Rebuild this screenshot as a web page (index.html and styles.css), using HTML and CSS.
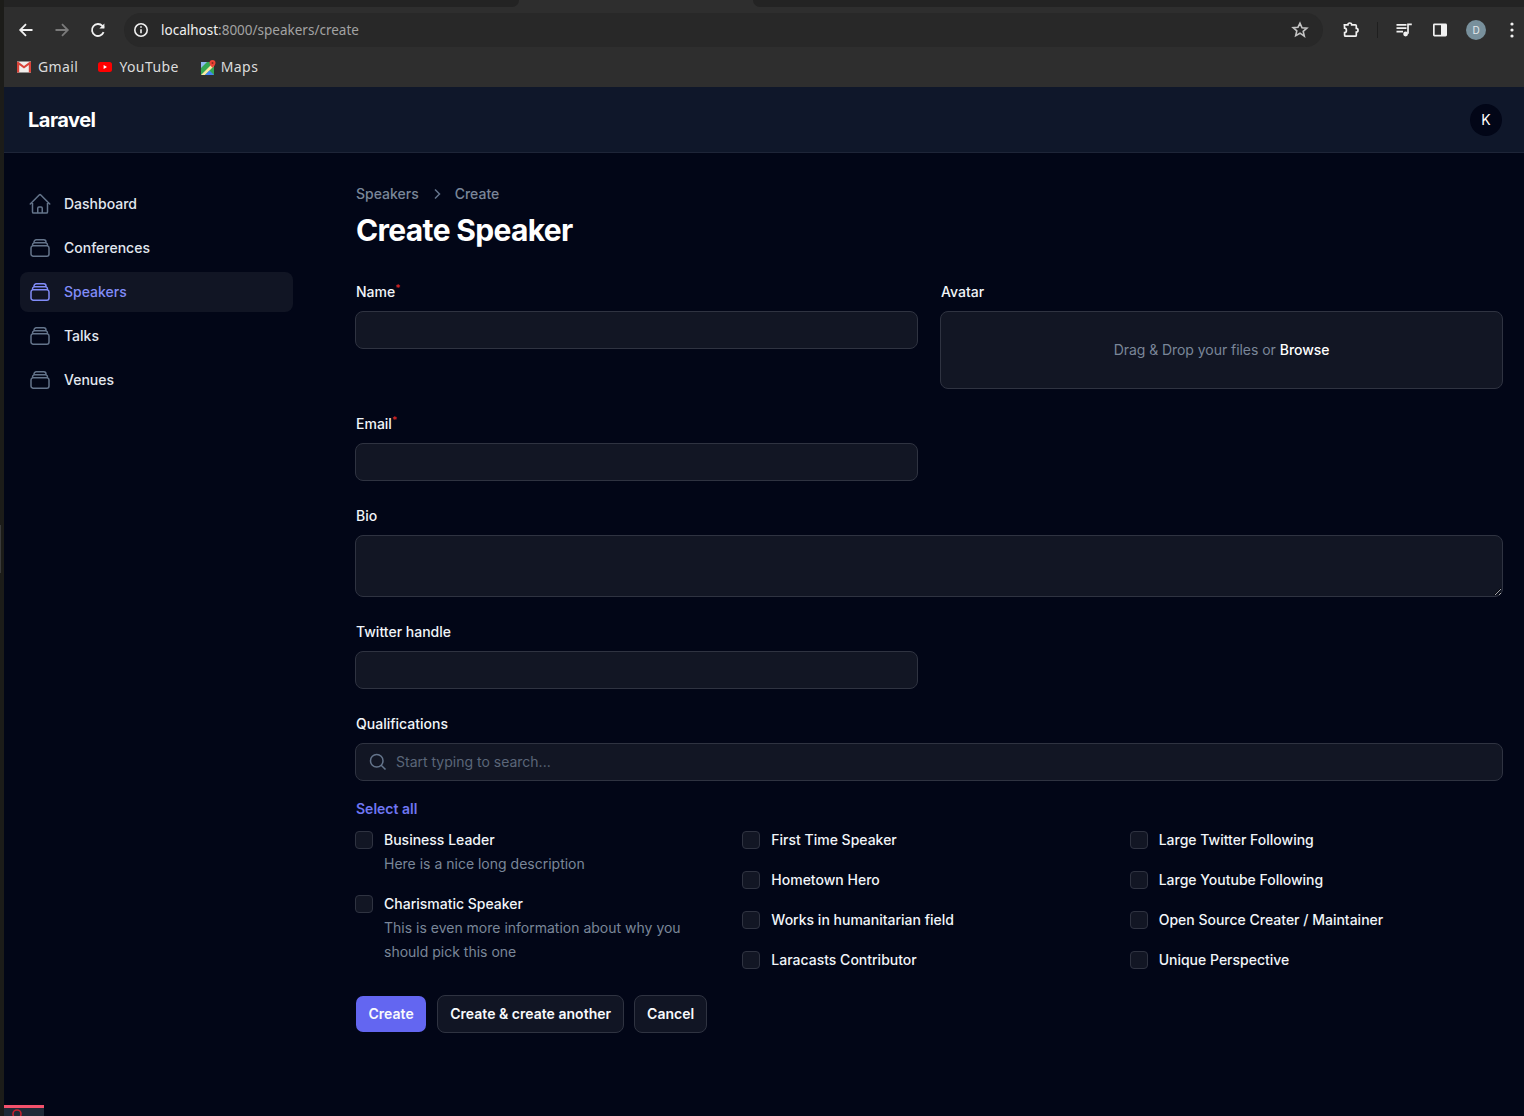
FILE: index.html
```html
<!DOCTYPE html>
<html lang="en">
<head>
    <meta charset="UTF-8">
    <title>Create Speaker</title>
    <link rel="stylesheet" href="styles.css">
</head>
<body>
    <div class="edge"><span class="edge-handle"></span></div>

    <div class="window">
        <div class="tabstrip">
            <span class="tab tab-left"></span>
            <span class="tab tab-right"></span>
        </div>

        <div class="toolbar">
            <span class="tool">
                <svg width="20" height="20" viewBox="0 0 20 20" fill="none" stroke="#f1f1f1" stroke-width="1.8"><path d="M16.5 10H4.5M10 4.2L4.2 10l5.8 5.8"/></svg>
            </span>
            <span class="tool">
                <svg width="20" height="20" viewBox="0 0 20 20" fill="none" stroke="#7a7a7a" stroke-width="1.8"><path d="M3.5 10h12M10 4.2l5.8 5.8-5.8 5.8"/></svg>
            </span>
            <span class="tool">
                <svg width="20" height="20" viewBox="0 0 20 20" fill="none" stroke="#f1f1f1" stroke-width="1.8"><path d="M15.6 12.2A6 6 0 1 1 14.4 5.9L16 7.6"/><path d="M16.4 3.4v5h-5" stroke="none" fill="#f1f1f1"/></svg>
            </span>

            <div class="omnibox">
                <svg width="20" height="20" viewBox="0 0 20 20" fill="none" stroke="#efefef" stroke-width="1.6"><circle cx="10" cy="10" r="6.2"/><path d="M10 9.2v4M10 6.2v1.6"/></svg>
                <span class="url"><b>localhost</b>:8000/speakers/create</span>
                <svg class="star" width="20" height="20" viewBox="0 0 20 20" fill="none" stroke="#c4c4c4" stroke-width="1.6"><path d="M10 3.2l2 4.5 4.9.5-3.7 3.2 1.1 4.8L10 13.2l-4.3 2.5 1.1-4.8-3.7-3.2 4.9-.5z"/></svg>
            </div>

            <span class="tool tool-puzzle">
                <svg width="20" height="20" viewBox="0 0 20 20" fill="none" stroke="#f1f1f1" stroke-width="1.7"><path d="M3.4 4.8h3.5c0-2.4 3.8-2.4 3.8 0h3.6c.6 0 1 .4 1 1v2.6c2.3 0 2.3 3.6 0 3.6v3.2c0 .6-.4 1-1 1H4.6c-.6 0-1-.4-1-1v-2.6c2.4 0 2.4-4.4 0-4.4z"/></svg>
            </span>
            <span class="tool-sep"></span>
            <span class="tool">
                <svg width="20" height="20" viewBox="0 0 20 20" fill="none" stroke="#f1f1f1" stroke-width="1.7"><path d="M2.5 4.8h10M2.5 8.2h10M2.5 11.6h6.5M14 13.8V4.4h3.8"/><circle cx="11.6" cy="14" r="2.4" fill="#f1f1f1" stroke="none"/></svg>
            </span>
            <span class="tool">
                <svg width="20" height="20" viewBox="0 0 20 20"><rect x="3" y="3.5" width="14" height="13" rx="1.4" fill="#f1f1f1"/><rect x="4.7" y="5.2" width="6.3" height="9.6" fill="#2e2e2e"/></svg>
            </span>
            <span class="tool">
                <span class="profile">D</span>
            </span>
            <span class="tool tool-kebab">
                <svg width="4" height="16" viewBox="0 0 4 16" fill="#f1f1f1"><circle cx="2" cy="2" r="1.6"/><circle cx="2" cy="8" r="1.6"/><circle cx="2" cy="14" r="1.6"/></svg>
            </span>
        </div>

        <div class="bookmarks">
            <a class="bookmark">
                <svg width="14" height="14" viewBox="0 0 14 14"><rect y="1.5" width="14" height="11" fill="#f1efec"/><path d="M0 2v10.5h2.2V5L7 8.6 11.8 5v7.5H14V2l-1-.5L7 6 1 1.5z" fill="#d9443a"/></svg>
                Gmail
            </a>
            <a class="bookmark">
                <svg width="14" height="14" viewBox="0 0 14 14"><rect y="2" width="14" height="10" rx="2.5" fill="#f00"/><path d="M5.6 5v4L9 7z" fill="#fff"/></svg>
                YouTube
            </a>
            <a class="bookmark bookmark-maps">
                <svg width="15" height="15" viewBox="0 0 15 15"><rect y="2" width="13" height="13" fill="#34a853"/><path d="M0 15L13 2v4L4 15z" fill="#fbe9a5"/><path d="M0 2h6L0 8z" fill="#8fb8f0"/><path d="M4 15l4.5-4.5L13 15z" fill="#4285f4"/><path d="M11.5 0a3 3 0 0 1 3 3c0 2-3 4.8-3 4.8S8.5 5 8.5 3a3 3 0 0 1 3-3z" fill="#ea4335"/><circle cx="11.5" cy="3" r="1" fill="#8c2a22"/></svg>
                Maps
            </a>
        </div>

        <header class="app-header">
            <span class="logo">Laravel</span>
            <span class="user-badge">K</span>
        </header>

        <div class="app-body">
            <aside class="sidebar">
                <a class="nav-item">
                    <svg class="nav-icon" viewBox="0 0 24 24"><path d="M2.25 12l8.954-8.955c.44-.439 1.152-.439 1.591 0L21.75 12M4.5 9.75v10.125c0 .621.504 1.125 1.125 1.125H9.75v-4.875c0-.621.504-1.125 1.125-1.125h2.25c.621 0 1.125.504 1.125 1.125V21h4.125c.621 0 1.125-.504 1.125-1.125V9.75M8.25 21h8.25"/></svg>
                    Dashboard
                </a>
                <a class="nav-item">
                    <svg class="nav-icon" viewBox="0 0 24 24"><path d="M6 6.878V6a2.25 2.25 0 012.25-2.25h7.5A2.25 2.25 0 0118 6v.878m-12 0c.235-.083.487-.128.75-.128h10.5c.263 0 .515.045.75.128m-12 0A2.25 2.25 0 004.5 9v.878m13.5-3A2.25 2.25 0 0119.5 9v.878m0 0a2.246 2.246 0 00-.75-.128H5.25c-.263 0-.515.045-.75.128m15 0A2.25 2.25 0 0121 12v6a2.25 2.25 0 01-2.25 2.25H5.25A2.25 2.25 0 013 18v-6c0-.98.626-1.813 1.5-2.122"/></svg>
                    Conferences
                </a>
                <a class="nav-item active">
                    <svg class="nav-icon" viewBox="0 0 24 24"><path d="M6 6.878V6a2.25 2.25 0 012.25-2.25h7.5A2.25 2.25 0 0118 6v.878m-12 0c.235-.083.487-.128.75-.128h10.5c.263 0 .515.045.75.128m-12 0A2.25 2.25 0 004.5 9v.878m13.5-3A2.25 2.25 0 0119.5 9v.878m0 0a2.246 2.246 0 00-.75-.128H5.25c-.263 0-.515.045-.75.128m15 0A2.25 2.25 0 0121 12v6a2.25 2.25 0 01-2.25 2.25H5.25A2.25 2.25 0 013 18v-6c0-.98.626-1.813 1.5-2.122"/></svg>
                    Speakers
                </a>
                <a class="nav-item">
                    <svg class="nav-icon" viewBox="0 0 24 24"><path d="M6 6.878V6a2.25 2.25 0 012.25-2.25h7.5A2.25 2.25 0 0118 6v.878m-12 0c.235-.083.487-.128.75-.128h10.5c.263 0 .515.045.75.128m-12 0A2.25 2.25 0 004.5 9v.878m13.5-3A2.25 2.25 0 0119.5 9v.878m0 0a2.246 2.246 0 00-.75-.128H5.25c-.263 0-.515.045-.75.128m15 0A2.25 2.25 0 0121 12v6a2.25 2.25 0 01-2.25 2.25H5.25A2.25 2.25 0 013 18v-6c0-.98.626-1.813 1.5-2.122"/></svg>
                    Talks
                </a>
                <a class="nav-item">
                    <svg class="nav-icon" viewBox="0 0 24 24"><path d="M6 6.878V6a2.25 2.25 0 012.25-2.25h7.5A2.25 2.25 0 0118 6v.878m-12 0c.235-.083.487-.128.75-.128h10.5c.263 0 .515.045.75.128m-12 0A2.25 2.25 0 004.5 9v.878m13.5-3A2.25 2.25 0 0119.5 9v.878m0 0a2.246 2.246 0 00-.75-.128H5.25c-.263 0-.515.045-.75.128m15 0A2.25 2.25 0 0121 12v6a2.25 2.25 0 01-2.25 2.25H5.25A2.25 2.25 0 013 18v-6c0-.98.626-1.813 1.5-2.122"/></svg>
                    Venues
                </a>
            </aside>

            <main class="content">
                <div class="breadcrumbs">
                    <span>Speakers</span>
                    <svg width="20" height="20" viewBox="0 0 20 20" fill="none" stroke="#64748b" stroke-width="1.5"><path d="M8 5.5l4.5 4.5L8 14.5"/></svg>
                    <span>Create</span>
                </div>
                <h1 class="page-title">Create Speaker</h1>

                <form class="form-grid">
                    <div class="field">
                        <label class="field-label">Name<sup>*</sup></label>
                        <input class="text-input" type="text">
                    </div>
                    <div class="field">
                        <label class="field-label">Avatar</label>
                        <div class="dropzone">Drag &amp; Drop your files or <b>Browse</b></div>
                    </div>
                    <div class="field">
                        <label class="field-label">Email<sup>*</sup></label>
                        <input class="text-input" type="email">
                    </div>
                    <div class="field field-wide">
                        <label class="field-label">Bio</label>
                        <textarea class="text-input bio-input"></textarea>
                    </div>
                    <div class="field">
                        <label class="field-label">Twitter handle</label>
                        <input class="text-input" type="text">
                    </div>
                    <div class="field field-wide">
                        <label class="field-label">Qualifications</label>
                        <div class="search-box">
                            <svg width="20" height="20" viewBox="0 0 24 24" fill="none" stroke="#64748b" stroke-width="1.8"><path d="M21 21l-5.197-5.197m0 0A7.5 7.5 0 105.196 5.196a7.5 7.5 0 0010.607 10.607z"/></svg>
                            <input class="search-input" type="text" placeholder="Start typing to search...">
                        </div>
                        <a class="select-all">Select all</a>
                        <div class="check-grid">
                            <div class="check-col">
                                <label class="check-item">
                                    <input class="check" type="checkbox">
                                    <span><span class="check-name">Business Leader</span><span class="check-desc">Here is a nice long description</span></span>
                                </label>
                                <label class="check-item">
                                    <input class="check" type="checkbox">
                                    <span><span class="check-name">Charismatic Speaker</span><span class="check-desc">This is even more information about why you should pick this one</span></span>
                                </label>
                            </div>
                            <div class="check-col">
                                <label class="check-item"><input class="check" type="checkbox"><span class="check-name">First Time Speaker</span></label>
                                <label class="check-item"><input class="check" type="checkbox"><span class="check-name">Hometown Hero</span></label>
                                <label class="check-item"><input class="check" type="checkbox"><span class="check-name">Works in humanitarian field</span></label>
                                <label class="check-item"><input class="check" type="checkbox"><span class="check-name">Laracasts Contributor</span></label>
                            </div>
                            <div class="check-col">
                                <label class="check-item"><input class="check" type="checkbox"><span class="check-name">Large Twitter Following</span></label>
                                <label class="check-item"><input class="check" type="checkbox"><span class="check-name">Large Youtube Following</span></label>
                                <label class="check-item"><input class="check" type="checkbox"><span class="check-name">Open Source Creater / Maintainer</span></label>
                                <label class="check-item"><input class="check" type="checkbox"><span class="check-name">Unique Perspective</span></label>
                            </div>
                        </div>
                    </div>
                </form>

                <div class="form-actions">
                    <button class="btn btn-primary" type="button">Create</button>
                    <button class="btn" type="button">Create &amp; create another</button>
                    <button class="btn" type="button">Cancel</button>
                </div>
            </main>
        </div>
    </div>

    <div class="debug-tab">
        <svg width="12" height="12" viewBox="0 0 12 12" fill="none" stroke="#c4222f" stroke-width="1.6"><circle cx="6" cy="6" r="4"/></svg>
    </div>
</body>
</html>
```

FILE: styles.css
```css
* {
    box-sizing: border-box;
}

html, body {
    height: 100%;
}

body {
    margin: 0;
    display: flex;
    overflow: hidden;
    background-color: #1c1c19;
    color: #f3f4f6;
    font-family: "Inter", "Liberation Sans", sans-serif;
    font-size: 14px;
    line-height: 20px;
}

.edge {
    position: relative;
    width: 4px;
    flex-shrink: 0;
}

.edge-handle {
    position: absolute;
    left: 0;
    top: 525px;
    width: 1px;
    height: 48px;
    background-color: #3a3a3a;
}

.window {
    flex: 1;
    min-width: 0;
    display: flex;
    flex-direction: column;
    background-color: #020617;
}

/* browser chrome */
.tabstrip {
    display: flex;
    justify-content: space-between;
    height: 7px;
    background-color: #2e2e2e;
}

.tab {
    display: block;
    height: 7px;
    background-color: #232323;
}

.tab-left {
    width: 515px;
    border-bottom-right-radius: 8px;
}

.tab-right {
    width: 771px;
    border-bottom-left-radius: 8px;
}

.toolbar {
    display: flex;
    align-items: center;
    height: 40px;
    padding-left: 4px;
    padding-top: 6px;
    background-color: #2e2e2e;
}

.tool {
    display: flex;
    align-items: center;
    justify-content: center;
    width: 36px;
    height: 34px;
    flex-shrink: 0;
}

.tool-puzzle {
    margin-left: 10px;
}

.tool-sep {
    width: 1px;
    height: 16px;
    margin: 0 8px;
    background-color: #1f1f1f;
    flex-shrink: 0;
}

.tool-kebab {
    width: 30px;
    justify-content: flex-end;
    padding-right: 10px;
}

.omnibox {
    flex: 1;
    display: flex;
    align-items: center;
    gap: 10px;
    height: 34px;
    margin-left: 8px;
    padding: 0 13px 0 7px;
    border-radius: 17px;
    background-color: #282828;
}

.url {
    font-family: "Noto Sans", sans-serif;
    font-size: 13.5px;
    color: #a3a3a3;
}

.url b {
    font-weight: 400;
    color: #f1f1f1;
}

.star {
    margin-left: auto;
}

.profile {
    display: flex;
    align-items: center;
    justify-content: center;
    width: 20px;
    height: 20px;
    border-radius: 50%;
    background-color: #78909c;
    color: #e4e9ec;
    font-size: 10px;
}

.bookmarks {
    display: flex;
    align-items: center;
    gap: 20px;
    height: 40px;
    padding-left: 13px;
    background-color: #2e2e2e;
}

.bookmark {
    display: flex;
    align-items: center;
    gap: 7px;
    font-family: "Noto Sans", sans-serif;
    font-size: 14px;
    letter-spacing: 0.4px;
    color: #dcdcdc;
}

.bookmark-maps {
    gap: 5px;
    margin-left: 2px;
}

/* app shell */
.app-header {
    display: flex;
    align-items: center;
    justify-content: space-between;
    height: 66px;
    padding: 0 22px 0 24px;
    background-color: #0f172a;
    border-bottom: 1px solid #1e2538;
}

.logo {
    font-size: 20px;
    font-weight: 700;
    letter-spacing: -0.025em;
    color: #fff;
}

.user-badge {
    display: flex;
    align-items: center;
    justify-content: center;
    width: 32px;
    height: 32px;
    border-radius: 50%;
    background-color: #020617;
    color: #fff;
    font-size: 14px;
}

.app-body {
    flex: 1;
    display: flex;
    min-height: 0;
}

.sidebar {
    width: 305px;
    flex-shrink: 0;
    display: flex;
    flex-direction: column;
    gap: 4px;
    padding: 31px 16px 0;
}

.nav-item {
    display: flex;
    align-items: center;
    gap: 12px;
    height: 40px;
    padding: 0 8px;
    border-radius: 8px;
    font-weight: 500;
    color: #e2e8f0;
}

.nav-icon {
    width: 24px;
    height: 24px;
    fill: none;
    stroke: #64748b;
    stroke-width: 1.5;
    stroke-linecap: round;
    stroke-linejoin: round;
}

.nav-item.active {
    background-color: #111524;
    color: #818cf8;
}

.nav-item.active .nav-icon {
    stroke: #818cf8;
}

.content {
    flex: 1;
    min-width: 0;
    padding: 31px 21px 0 46px;
}

.breadcrumbs {
    display: flex;
    align-items: center;
    gap: 8px;
    padding-left: 1px;
    font-weight: 500;
    color: #7a8699;
}

.page-title {
    margin: 8px 0 34px;
    padding-left: 1px;
    font-size: 30px;
    line-height: 36px;
    font-weight: 700;
    letter-spacing: -0.022em;
    color: #fff;
}

/* form */
.form-grid {
    display: grid;
    grid-template-columns: 1fr 1fr;
    gap: 25px 22px;
}

.field-wide {
    grid-column: span 2;
}

.field-label {
    display: block;
    margin-bottom: 9px;
    padding-left: 1px;
    font-weight: 500;
    color: #f1f5f9;
}

.field-label sup {
    line-height: 0;
    font-size: 10px;
    vertical-align: 5px;
    color: #dc2626;
}

.text-input,
.dropzone,
.search-box {
    display: block;
    width: 100%;
    border: 1px solid #2f3341;
    border-radius: 8px;
    background-color: #121624;
    color: #fff;
    font-family: inherit;
    font-size: 14px;
}

.text-input {
    height: 38px;
    padding: 0 12px;
}

.bio-input {
    height: 62px;
    resize: vertical;
}

.dropzone {
    display: flex;
    align-items: center;
    justify-content: center;
    gap: 4px;
    height: 78px;
    letter-spacing: -0.05px;
    color: #7a8699;
}

.dropzone b {
    font-weight: 500;
    color: #fff;
}

.search-box {
    display: flex;
    align-items: center;
    gap: 8px;
    height: 38px;
    padding-left: 12px;
}

.search-input {
    flex: 1;
    padding: 0 0 2px;
    border: 0;
    outline: 0;
    background: none;
    color: #fff;
    font-family: inherit;
    font-size: 14px;
}

.search-input::placeholder {
    color: #5b6679;
}

.select-all {
    display: block;
    margin: 18px 0 9px 1px;
    font-weight: 600;
    color: #6f76f3;
}

.check-grid {
    display: grid;
    grid-template-columns: repeat(3, 1fr);
    gap: 14px;
}

.check-col {
    display: flex;
    flex-direction: column;
    gap: 16px;
}

.check-item {
    display: flex;
    align-items: flex-start;
    gap: 11px;
    line-height: 24px;
}

.check {
    appearance: none;
    flex-shrink: 0;
    width: 18px;
    height: 18px;
    margin: 3px 0 0;
    border: 1px solid #2f3341;
    border-radius: 4px;
    background-color: #121624;
}

.check-name {
    display: block;
    font-weight: 500;
    color: #f1f5f9;
}

.check-desc {
    display: block;
    max-width: 320px;
    color: #7a8699;
}

.form-actions {
    display: flex;
    gap: 10px;
    margin-top: 23px;
}

.btn {
    height: 38px;
    padding: 0 12px 2px;
    border: 1px solid #2f3341;
    border-radius: 8px;
    background-color: #111524;
    color: #f8fafc;
    font-family: inherit;
    font-size: 14px;
    font-weight: 600;
    letter-spacing: 0.02px;
}

.btn-primary {
    padding: 0 12.5px 2px;
    border-color: transparent;
    background-color: #6366f1;
    background-clip: padding-box;
}

.debug-tab {
    position: absolute;
    left: 4px;
    bottom: 0;
    width: 40px;
    height: 11px;
    padding-left: 7px;
    overflow: hidden;
    border-top: 3px solid #f4516c;
    background-color: #1f2a38;
    line-height: 0;
}
```
